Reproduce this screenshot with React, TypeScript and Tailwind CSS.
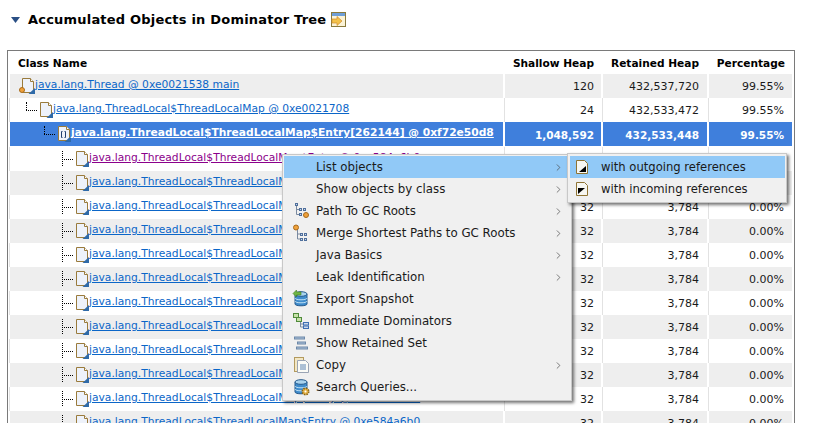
import React from 'react';
import { ChevronRight } from 'lucide-react';

const font = "font-['DejaVu_Sans','Liberation_Sans',sans-serif]";

const ENTRY = 'java.lang.ThreadLocal$ThreadLocalMap$Entry @ 0xe584a6b0';
const COLS = 'grid grid-cols-[493px_96px_104px_83px] gap-x-[2px]';

interface Row {
  name: string;
  depth: number;
  shallow: string;
  retained: string;
  pct: string;
  gc?: boolean;
  array?: boolean;
  visited?: boolean;
}

const rows: Row[] = [
  { name: 'java.lang.Thread @ 0xe0021538 main', depth: 0, shallow: '120', retained: '432,537,720', pct: '99.55%', gc: true },
  { name: 'java.lang.ThreadLocal$ThreadLocalMap @ 0xe0021708', depth: 1, shallow: '24', retained: '432,533,472', pct: '99.55%' },
  { name: 'java.lang.ThreadLocal$ThreadLocalMap$Entry[262144] @ 0xf72e50d8', depth: 2, shallow: '1,048,592', retained: '432,533,448', pct: '99.55%', array: true },
  { name: ENTRY, depth: 3, shallow: '32', retained: '3,784', pct: '0.00%', visited: true },
  ...Array.from({ length: 11 }, () => ({ name: ENTRY, depth: 3, shallow: '32', retained: '3,784', pct: '0.00%' })),
];

const DocIcon = ({ gc, array }: { gc?: boolean; array?: boolean }) => (
  <svg width="16" height="16" viewBox="0 0 16 16" className="shrink-0 overflow-visible">
    <path d="M.5.5h8l3 3v11H.5z" fill="#eef2fa" stroke="#9a7b3c" />
    <path d="M8.5.5v3h3" fill="#fff" stroke="#9a7b3c" />
    {array && <path d="M4.5 5.5h-1v6h1M6.5 5.5h1v6h-1" fill="none" stroke="#1f3f70" />}
    <path d="M13 10v6H6.5z" fill="#2f6aa8" />
    {gc && <circle cx="0" cy="12" r="2.5" fill="#f0a23c" stroke="#a86a1a" />}
  </svg>
);

const Connector = ({ last }: { last: boolean }) => (
  <span className="relative w-[14px] self-stretch shrink-0">
    <span className={`absolute left-0 top-[4px] border-l border-dotted border-black ${last ? 'h-[8px]' : 'h-[15px]'}`} />
    <span className="absolute left-0 top-[12px] w-[11px] border-t border-dotted border-black" />
  </span>
);

const TreeIcon = ({ mark }: { mark: 'end' | 'start' }) => (
  <svg width="18" height="18" viewBox="0 0 18 18">
    {mark === 'end' ? (
      <>
        <path d="M4.5 3v9.5H10M4.5 7.5H9" stroke="#7a8aa0" fill="none" />
        <rect x="3.5" y="1.5" width="2" height="2" fill="#cdd9ea" stroke="#4f6f9c" />
        <rect x="7.5" y="6.5" width="2" height="2" fill="#cdd9ea" stroke="#4f6f9c" />
        <rect x="11.5" y="6.5" width="2" height="2" fill="#cdd9ea" stroke="#4f6f9c" />
        <rect x="7.5" y="11.5" width="2" height="2" fill="#cdd9ea" stroke="#4f6f9c" />
        <circle cx="14" cy="13" r="2.5" fill="#f0a23c" stroke="#a86a1a" />
      </>
    ) : (
      <>
        <path d="M5.5 5v10H10M5.5 10H9" stroke="#7a8aa0" fill="none" />
        <rect x="8.5" y="9.5" width="2" height="2" fill="#cdd9ea" stroke="#4f6f9c" />
        <rect x="12.5" y="9.5" width="2" height="2" fill="#cdd9ea" stroke="#4f6f9c" />
        <rect x="8.5" y="14.5" width="2" height="2" fill="#cdd9ea" stroke="#4f6f9c" />
        <rect x="12.5" y="14.5" width="2" height="2" fill="#cdd9ea" stroke="#4f6f9c" />
        <circle cx="4" cy="3.5" r="2.5" fill="#f0a23c" stroke="#a86a1a" />
      </>
    )}
  </svg>
);

const DbIcon = ({ gear }: { gear?: boolean }) => (
  <svg width="18" height="18" viewBox="0 0 18 18">
    <path d="M3 4v10c0 2.4 12 2.4 12 0V4z" fill="#3f8ccc" stroke="#24598c" />
    <ellipse cx="9" cy="4" rx="6" ry="2.3" fill="#a9d3ee" stroke="#24598c" />
    <path d="M3 8c0 2.4 12 2.4 12 0M3 11c0 2.4 12 2.4 12 0" fill="none" stroke="#bfe0f4" />
    {gear ? (
      <>
        <circle cx="13.5" cy="13.5" r="3.2" fill="#e8b64c" stroke="#8a6414" strokeWidth="1.6" strokeDasharray="1.5 1" />
        <circle cx="13.5" cy="13.5" r="1" fill="#fff" />
      </>
    ) : (
      <path d="M1 3.5L4.5 0v2H9v3H4.5v2z" fill="#6fb544" stroke="#3f7d22" strokeWidth="0.6" />
    )}
  </svg>
);

const DominatorsIcon = () => (
  <svg width="18" height="18" viewBox="0 0 18 18">
    <rect x="1.5" y="1.5" width="5" height="4" fill="#c6e0a8" stroke="#4f8a3a" />
    <rect x="4.5" y="5.5" width="5" height="4" fill="#c6e0a8" stroke="#4f8a3a" />
    <path d="M8.5 10v5h3M8.5 12h3" fill="none" stroke="#7a8aa0" />
    <rect x="11.5" y="10.5" width="5" height="2.5" fill="#cdd9ea" stroke="#3f6fb4" />
    <rect x="11.5" y="14" width="5" height="2.5" fill="#cdd9ea" stroke="#3f6fb4" />
  </svg>
);

const RetainedIcon = () => (
  <svg width="18" height="18" viewBox="0 0 18 18">
    <rect x="2.5" y="3" width="10" height="2" fill="#a9bfd8" stroke="#6c88a8" />
    <rect x="5.5" y="8" width="8" height="2" fill="#a9bfd8" stroke="#6c88a8" />
    <rect x="4.5" y="13" width="11" height="2" fill="#a9bfd8" stroke="#6c88a8" />
  </svg>
);

const CopyIcon = () => (
  <svg width="18" height="18" viewBox="0 0 18 18">
    <rect x="2.5" y="1.5" width="9" height="14" fill="#f3e7c4" stroke="#b39a5e" />
    <path d="M5.5 4.5h8l3 3v9h-11z" fill="#fbfbf6" stroke="#9aa4b4" />
    <path d="M8 9h6M8 11h6M8 13h6" stroke="#5f86b4" />
  </svg>
);

const RefIcon = ({ dir }: { dir: 'out' | 'in' }) => (
  <svg width="12" height="14" viewBox="0 0 12 14">
    <path d="M.5.5h8l3 3v10H.5z" fill="#f7f7f2" stroke="#8f7434" />
    {dir === 'out' ? <path d="M10 6v6H3z" fill="#000" /> : <path d="M2 6h7l-7 6z" fill="#000" />}
  </svg>
);

const menuItems: { label: string; icon?: React.ReactNode; sub?: boolean; active?: boolean }[] = [
  { label: 'List objects', sub: true, active: true },
  { label: 'Show objects by class', sub: true },
  { label: 'Path To GC Roots', sub: true, icon: <TreeIcon mark="end" /> },
  { label: 'Merge Shortest Paths to GC Roots', sub: true, icon: <TreeIcon mark="start" /> },
  { label: 'Java Basics', sub: true },
  { label: 'Leak Identification', sub: true },
  { label: 'Export Snapshot', icon: <DbIcon /> },
  { label: 'Immediate Dominators', icon: <DominatorsIcon /> },
  { label: 'Show Retained Set', icon: <RetainedIcon /> },
  { label: 'Copy', sub: true, icon: <CopyIcon /> },
  { label: 'Search Queries...', icon: <DbIcon gear /> },
];

const TableRow = ({ row, index }: { row: Row; index: number }) => {
  const selected = index === 2;
  const white = !selected && index % 2 === 1;
  const bg = selected ? 'bg-[#3f7fdc]' : white ? 'bg-white shadow-[-1px_0_0_#e2e2e2]' : 'bg-[#eeeeee]';
  const cell = selected ? 'text-white font-bold text-[10.5px]' : 'text-[#1a1a1a]';
  const link = selected ? 'text-white font-bold' : row.visited ? 'text-[#8b008b]' : 'text-[#0b66c8]';
  const padding = ['pl-[12px]', 'pl-[16px]', 'pl-[34px]', 'pl-[52px]'][row.depth];

  return (
    <div className={`${COLS} shrink-0 pb-[2px] ${selected ? 'h-[25px]' : 'h-[24px]'}`}>
      <div className={`${bg} ${padding} flex items-center min-w-0`}>
        {row.depth > 0 && <Connector last={row.depth < 3} />}
        <DocIcon gc={row.gc} array={row.array} />
        <a className={`${link} text-[10.7px] underline ml-[-3px] mb-[2px] whitespace-nowrap`}>{row.name}</a>
      </div>
      <div className={`${bg} ${cell} text-right pr-[7px] pt-[2px] leading-[22px]`}>{row.shallow}</div>
      <div className={`${bg} ${cell} text-right pr-[8px] pt-[2px] leading-[22px]`}>{row.retained}</div>
      <div className={`${bg} ${cell} text-right pr-[8px] pt-[2px] leading-[22px]`}>{row.pct}</div>
    </div>
  );
};

export default function App() {
  return (
    <div className={`${font} relative h-[423px] w-[839px] overflow-hidden bg-white text-[11px]`}>
      <div className="flex items-center h-[50px] pl-[11px] pb-[11px]">
        <svg width="9" height="6" viewBox="0 0 9 6" className="mr-[8px]">
          <path d="M0 0h9L4.5 6z" fill="#2a4f85" />
        </svg>
        <h1 className="font-bold text-[13px] text-black tracking-[0.2px]">Accumulated Objects in Dominator Tree</h1>
        <svg width="15" height="15" viewBox="0 0 15 15" className="ml-[5px]">
          <rect x="0.5" y="0.5" width="14" height="14" fill="#fbf3d6" stroke="#8a7a3c" />
          <rect x="1" y="1" width="13" height="3" fill="#6f9fd8" />
          <path d="M1 7h5V4.5L11 9l-5 4.5V11H1z" fill="#f3c24a" stroke="#d08a2c" strokeWidth="0.7" />
        </svg>
      </div>

      <div className="ml-[7px] w-[788px] h-[400px] border border-[#7a7a7a] pl-[2px]">
        <div className={`${COLS} h-[23px] font-bold text-[10.6px] text-black leading-[24px] whitespace-nowrap`}>
          <div className="pl-[8px]">Class Name</div>
          <div className="text-right pr-[7px]">Shallow Heap</div>
          <div className="text-right pr-[8px]">Retained Heap</div>
          <div className="text-right pr-[7px]">Percentage</div>
        </div>
        <div className="flex flex-col">
          {rows.map((row, i) => (
            <TableRow key={i} row={row} index={i} />
          ))}
        </div>
      </div>

      {/* context menu */}
      <div className="absolute left-[282px] top-[154px] w-[290px] h-[247px] bg-[#f0f0f0] border border-[#c8c8c8] p-[1px] text-[11.8px] shadow-[2px_2px_3px_rgba(0,0,0,0.55)]">
        {menuItems.map((item) => (
          <div
            key={item.label}
            className={`flex items-center h-[22px] text-[#1a1a1a] ${item.active ? 'bg-[#91c9f7]' : ''}`}
          >
            <span className="w-[32px] pl-[1px] flex justify-center shrink-0">{item.icon}</span>
            <span className="flex-1 pt-[2px] whitespace-nowrap">{item.label}</span>
            {item.sub && <ChevronRight size={11} strokeWidth={1.5} className="text-[#444] mr-[6px]" />}
          </div>
        ))}
      </div>

      {/* submenu */}
      <div className="absolute left-[567px] top-[153px] w-[220px] h-[50px] bg-[#f0f0f0] border border-[#c8c8c8] p-[2px] pr-[1px] text-[11.6px] shadow-[2px_2px_3px_rgba(0,0,0,0.55)]">
        <div className="flex items-center h-[22px] bg-[#91c9f7] text-[#1a1a1a]">
          <span className="w-[31px] pl-[6px] flex shrink-0"><RefIcon dir="out" /></span>
          <span className="pt-[2px]">with outgoing references</span>
        </div>
        <div className="flex items-center h-[22px] text-[#1a1a1a]">
          <span className="w-[31px] pl-[6px] flex shrink-0"><RefIcon dir="in" /></span>
          <span className="pt-[2px]">with incoming references</span>
        </div>
      </div>
    </div>
  );
}
